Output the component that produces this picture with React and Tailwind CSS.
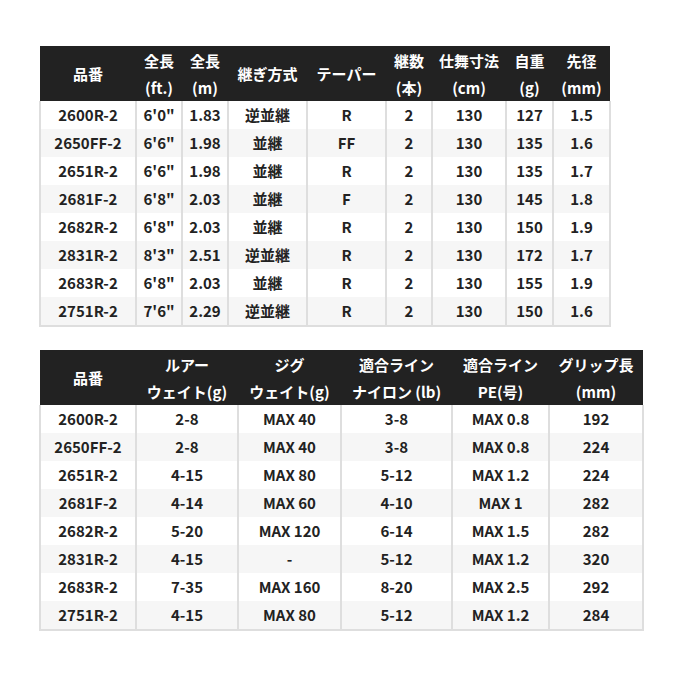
import React from "react";

const font = { fontFamily: '"Noto Sans CJK JP", "Noto Sans", sans-serif' };

const t1Cols = [96, 46, 46, 79, 79, 46, 74, 47, 57];
const t1Head = [
  ["品番"],
  ["全長", "(ft.)"],
  ["全長", "(m)"],
  ["継ぎ方式"],
  ["テーパー"],
  ["継数", "(本)"],
  ["仕舞寸法", "(cm)"],
  ["自重", "(g)"],
  ["先径", "(mm)"],
];
const t1Rows = [
  ["2600R-2", "6'0\"", "1.83", "逆並継", "R", "2", "130", "127", "1.5"],
  ["2650FF-2", "6'6\"", "1.98", "並継", "FF", "2", "130", "135", "1.6"],
  ["2651R-2", "6'6\"", "1.98", "並継", "R", "2", "130", "135", "1.7"],
  ["2681F-2", "6'8\"", "2.03", "並継", "F", "2", "130", "145", "1.8"],
  ["2682R-2", "6'8\"", "2.03", "並継", "R", "2", "130", "150", "1.9"],
  ["2831R-2", "8'3\"", "2.51", "逆並継", "R", "2", "130", "172", "1.7"],
  ["2683R-2", "6'8\"", "2.03", "並継", "R", "2", "130", "155", "1.9"],
  ["2751R-2", "7'6\"", "2.29", "逆並継", "R", "2", "130", "150", "1.6"],
];

const t2Cols = [96, 102, 103, 111, 97, 94];
const t2Head = [
  ["品番"],
  ["ルアー", "ウェイト(g)"],
  ["ジグ", "ウェイト(g)"],
  ["適合ライン", "ナイロン (lb)"],
  ["適合ライン", "PE(号)"],
  ["グリップ長", "(mm)"],
];
const t2Rows = [
  ["2600R-2", "2-8", "MAX 40", "3-8", "MAX 0.8", "192"],
  ["2650FF-2", "2-8", "MAX 40", "3-8", "MAX 0.8", "224"],
  ["2651R-2", "4-15", "MAX 80", "5-12", "MAX 1.2", "224"],
  ["2681F-2", "4-14", "MAX 60", "4-10", "MAX 1", "282"],
  ["2682R-2", "5-20", "MAX 120", "6-14", "MAX 1.5", "282"],
  ["2831R-2", "4-15", "-", "5-12", "MAX 1.2", "320"],
  ["2683R-2", "7-35", "MAX 160", "8-20", "MAX 2.5", "292"],
  ["2751R-2", "4-15", "MAX 80", "5-12", "MAX 1.2", "284"],
];

function Table({ cols, head, rows }) {
  const width = cols.reduce((a, b) => a + b, 0);
  return (
    <table
      className="border-collapse table-fixed text-[15px] font-bold text-[#222]"
      style={{ width }}
    >
      <colgroup>
        {cols.map((w, i) => (
          <col key={i} style={{ width: w }} />
        ))}
      </colgroup>
      <thead>
        <tr className="bg-[#222222] text-white h-[55px]">
          {head.map((h, i) => (
            <th key={i} className="p-0 text-center font-bold leading-[27px] whitespace-nowrap">
              {h.map((line, j) => (
                <div key={j}>{line}</div>
              ))}
            </th>
          ))}
        </tr>
      </thead>
      <tbody>
        {rows.map((r, ri) => (
          <tr key={ri} className={ri % 2 === 0 ? "bg-white h-[28px]" : "bg-[#f6f6f6] h-[28px]"}>
            {r.map((c, ci) => (
              <td
                key={ci}
                className={
                  "p-0 text-center leading-[28px] whitespace-nowrap border-x-2 border-[#dedede]" +
                  (ri === rows.length - 1 ? " border-b-2" : "")
                }
              >
                {c}
              </td>
            ))}
          </tr>
        ))}
      </tbody>
    </table>
  );
}

export default function App() {
  return (
    <div className="w-[680px] h-[680px] bg-white pt-[46px] pl-[39px] flex flex-col gap-[23px]" style={font}>
      <Table cols={t1Cols} head={t1Head} rows={t1Rows} />
      <Table cols={t2Cols} head={t2Head} rows={t2Rows} />
    </div>
  );
}
